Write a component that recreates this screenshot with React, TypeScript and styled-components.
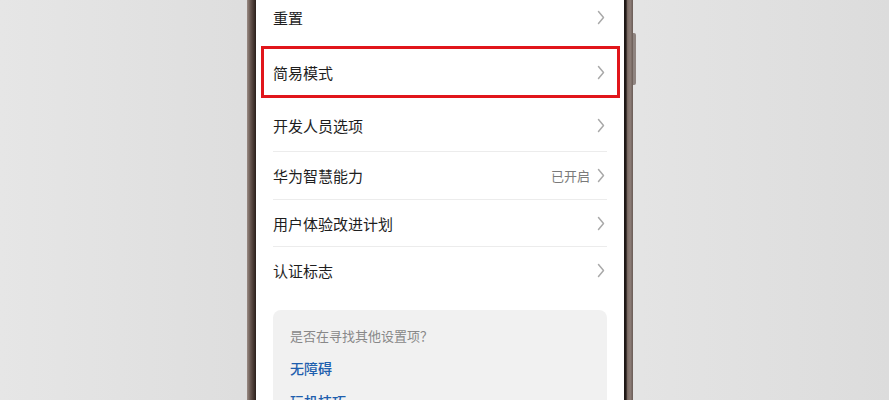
import styled, { createGlobalStyle } from 'styled-components';

const GlobalStyle = createGlobalStyle`
  html, body {
    margin: 0;
    padding: 0;
    height: 100%;
    overflow: hidden;
  }

  body {
    background: #e3e3e3;
    font-family: 'Noto Sans CJK SC', 'Noto Sans', sans-serif;
  }
`;

const Page = styled.div`
  display: flex;
  height: 400px;
  padding-left: 247px;

  background: linear-gradient(90deg, #e6e6e6 0%, #dedede 27%, #e4e4e4 72%, #dcdcdc 100%);
`;

const Phone = styled.div`
  position: relative;

  display: flex;
  height: 100%;
`;

const LeftBezel = styled.div`
  width: 9px;

  background: linear-gradient(90deg, #9a8c86 0%, #6b5a53 35%, #3e302b 80%, #2a201c 100%);
`;

const RightBezel = styled.div`
  width: 9px;

  background: linear-gradient(90deg, #1c1614 0%, #241c19 22%, #7d6d66 40%, #8c7d77 70%, #6a5c56 100%);
`;

const SideButton = styled.div`
  position: absolute;
  top: 33px;
  right: -3px;

  width: 3px;
  height: 52px;

  border-radius: 0 2px 2px 0;
  background: #8f8480;
`;

const Screen = styled.div`
  width: 368px;
  padding: 0 17px;
  box-sizing: border-box;

  background: #ffffff;
`;

const List = styled.div`
  margin-top: -10px;
`;

const Row = styled.div<{ $height: number; $divider?: boolean }>`
  position: relative;

  display: flex;
  align-items: center;
  justify-content: space-between;

  height: ${({ $height }) => $height}px;
  box-sizing: border-box;

  border-bottom: 1px solid ${({ $divider }) => ($divider ? '#ececec' : 'transparent')};
`;

const Label = styled.span`
  font-size: 15px;
  line-height: 1;
  color: #1e1e1e;
`;

const Trailing = styled.div`
  display: flex;
  align-items: center;
  gap: 7px;
  padding-right: 2px;
`;

const Status = styled.span`
  font-size: 13px;
  line-height: 1;
  color: #7a7a7a;
`;

const Highlight = styled.div`
  position: absolute;
  top: 1px;
  bottom: 1px;
  left: -12px;
  right: -13px;

  border: 3px solid #e1161b;
  pointer-events: none;
`;

const Card = styled.div`
  margin-top: 15px;
  padding: 19px 17px 0;

  border-radius: 8px;
  background: #f1f1f1;
`;

const Hint = styled.div`
  font-size: 13px;
  line-height: 1;
  color: #888888;
`;

const Link = styled.div`
  margin-top: 19px;

  font-size: 14px;
  font-weight: 500;
  line-height: 1;
  color: #1f5fae;
`;

const Chevron = () => (
  <svg width="8" height="15" viewBox="0 0 8 15" fill="none">
    <path d="M1.5 1.5 L6.5 7.5 L1.5 13.5" stroke="#a9a9a9" strokeWidth="1.5" strokeLinecap="round" strokeLinejoin="round" />
  </svg>
);

interface Item {
  label: string;
  height: number;
  divider?: boolean;
  status?: string;
  highlighted?: boolean;
}

const items: Item[] = [
  { label: '重置', height: 55 },
  { label: '简易模式', height: 55, highlighted: true },
  { label: '开发人员选项', height: 52, divider: true },
  { label: '华为智慧能力', height: 48, divider: true, status: '已开启' },
  { label: '用户体验改进计划', height: 47, divider: true },
  { label: '认证标志', height: 48 },
];

const App = () => {
  return (
    <>
      <GlobalStyle />
      <Page>
        <Phone>
          <LeftBezel />
          <Screen>
            <List>
              {items.map((item) => (
                <Row key={item.label} $height={item.height} $divider={item.divider}>
                  <Label>{item.label}</Label>
                  <Trailing>
                    {item.status && <Status>{item.status}</Status>}
                    <Chevron />
                  </Trailing>
                  {item.highlighted && <Highlight />}
                </Row>
              ))}
            </List>
            <Card>
              <Hint>是否在寻找其他设置项？</Hint>
              <Link>无障碍</Link>
              <Link>玩机技巧</Link>
            </Card>
          </Screen>
          <RightBezel />
          <SideButton />
        </Phone>
      </Page>
    </>
  );
};

export default App;
